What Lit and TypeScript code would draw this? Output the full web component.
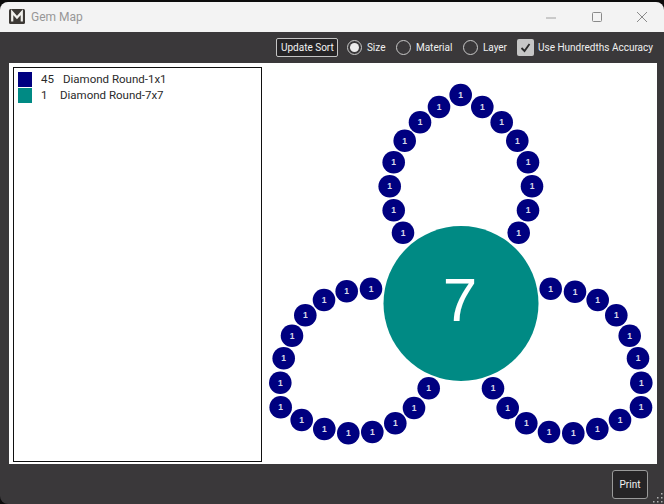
import { LitElement, html, css, svg } from "lit";
import { customElement } from "lit/decorators.js";

const SMALL: [number, number][] = [
  [460.7, 95], [439, 107], [482.3, 107], [420, 122.3], [501.7, 122.3], [404.7, 140.7], [517.3, 140.7],
  [393.7, 162.3], [528, 162.3], [389.7, 186.3], [532, 186.3], [393.7, 210.3], [528, 210.3], [403, 232.7], [518.7, 232.7],
  [371, 288.7], [346.7, 291.3], [324, 300], [305.3, 315.3], [292, 335.7], [283.7, 358.3], [280.3, 382.7], [280.7, 407.3],
  [301.7, 420], [324.3, 429], [348.3, 433.3], [372.3, 432], [395.3, 423.3], [414, 408], [428.7, 388.3],
  [550.7, 288.7], [575, 291.7], [597.7, 300], [616.3, 315.3], [629.7, 335.7], [638, 358.3], [641.3, 382.7], [641, 407.3],
  [620, 420], [597.3, 429], [573.3, 433.3], [549, 432], [526.3, 423.3], [507.7, 408], [493, 388.3],
];

@customElement("app-root")
export class AppRoot extends LitElement {
  static styles = css`
    :host {
      display: block;
      width: 664px;
      height: 504px;
      background: #0c0c0c;
      padding-top: 2px;
      box-sizing: border-box;
      font-family: Roboto, "Noto Sans", sans-serif;
      overflow: hidden;
    }
    .window {
      height: 502px;
      display: flex;
      flex-direction: column;
      border-radius: 8px 8px 0 8px;
      overflow: hidden;
      background: #3a383a;
    }
    .titlebar {
      height: 30px;
      flex: none;
      background: #f3f3f3;
      display: flex;
      align-items: center;
      padding-left: 9px;
      gap: 6px;
      color: #979797;
      font-size: 12px;
    }
    .logo { width: 16px; height: 15px; flex: none; display: block; margin-top: -1px; }
    .title { flex: 1; margin-top: -1px; }
    .winbtns { display: flex; align-items: center; margin-right: 17px; gap: 35.5px; }
    .winbtns svg { display: block; width: 10px; height: 10px; margin-top: -1px; }
    .toolbar {
      height: 31px;
      flex: none;
      display: flex;
      align-items: center;
      justify-content: flex-end;
      padding-right: 11px;
      color: #f0f0f0;
      font-size: 10px;
      box-sizing: border-box;
    }
    .btn {
      background: #262426;
      border: 1px solid #c4c4c4;
      border-radius: 2px;
      color: #f2f2f2;
      font: inherit;
      padding: 0;
      display: flex;
      align-items: center;
      justify-content: center;
    }
    .sort { width: 62px; height: 19px; margin-right: 9px; }
    .opt { display: flex; align-items: center; gap: 4.5px; }
    .radio {
      width: 13px;
      height: 13px;
      border: 1px solid #c8c8c8;
      border-radius: 50%;
      box-sizing: content-box;
      display: flex;
      align-items: center;
      justify-content: center;
    }
    .radio.on::after {
      content: "";
      width: 9px;
      height: 9px;
      border-radius: 50%;
      background: #ececec;
    }
    .size { margin-right: 11px; }
    .material { margin-right: 11px; }
    .layer { margin-right: 10px; }
    .check-opt { gap: 4px; }
    .check {
      width: 17px;
      height: 17px;
      border-radius: 2px;
      background: #c6c6c6;
      display: flex;
      align-items: center;
      justify-content: center;
    }
    .check svg { width: 13px; height: 13px; display: block; }
    .canvas {
      margin: 0 7px 0 9px;
      height: 401px;
      flex: none;
      background: #fff;
      position: relative;
      box-sizing: border-box;
      padding: 4px;
    }
    .list {
      width: 249px;
      height: 395px;
      border: 1px solid #111;
      box-sizing: border-box;
      padding: 4px;
      display: flex;
      flex-direction: column;
      gap: 1px;
      position: relative;
      background: #fff;
      color: #2a2a2a;
      font-size: 11.5px;
    }
    .row { display: flex; align-items: flex-start; height: 15px; line-height: 14px; }
    .swatch { width: 14px; height: 14.5px; flex: none; margin-right: 9px; }
    .count { flex: none; }
    .w1 { width: 22px; }
    .w2 { width: 19px; }
    .map { position: absolute; left: 0; top: 0; width: 648px; height: 401px; display: block; }
    .map text { font-family: "Liberation Sans", Arial, sans-serif; fill: #fff; text-anchor: middle; }
    .small-t { font-size: 8.5px; font-weight: 700; opacity: 0.85; }
    .big-t { font-size: 62px; }
    .footer {
      flex: 1;
      display: flex;
      align-items: center;
      justify-content: flex-end;
      padding-right: 16px;
      position: relative;
    }
    .print { width: 36px; height: 29px; border-color: #9a9a9a; border-radius: 3px; margin-top: 1px; font-size: 10px; }
    .grip { position: absolute; right: 1px; bottom: 1px; width: 10px; height: 10px; display: block; }
  `;

  render() {
    const ox = 9, oy = 63;
    return html`
      <div class="window">
        <div class="titlebar">
          <svg class="logo" viewBox="0 0 16 15">
            <rect width="16" height="15" rx="1.5" fill="#3d3935" />
            <path d="M3.2 12.5V3.2L8 8.5l4.8-5.3v9.3" fill="none" stroke="#f1f0ec" stroke-width="2.2" />
          </svg>
          <div class="title">Gem Map</div>
          <div class="winbtns">
            <svg viewBox="0 0 10 10"><path d="M0 6h10" stroke="#a0a0a0" stroke-width="1" fill="none" /></svg>
            <svg viewBox="0 0 10 10"><rect x="0.5" y="0.5" width="9" height="9" rx="1" stroke="#8a8a8a" stroke-width="1" fill="none" /></svg>
            <svg viewBox="0 0 10 10"><path d="M0 0l10 10M10 0L0 10" stroke="#8a8a8a" stroke-width="1" fill="none" /></svg>
          </div>
        </div>
        <div class="toolbar">
          <button class="btn sort">Update Sort</button>
          <div class="opt size"><span class="radio on"></span><span>Size</span></div>
          <div class="opt material"><span class="radio"></span><span>Material</span></div>
          <div class="opt layer"><span class="radio"></span><span>Layer</span></div>
          <div class="opt check-opt">
            <span class="check">
              <svg viewBox="0 0 13 13"><path d="M2.5 7l3 3 5-7" fill="none" stroke="#2a2a2a" stroke-width="1.8" /></svg>
            </span>
            <span>Use Hundredths Accuracy</span>
          </div>
        </div>
        <div class="canvas">
          <svg class="map" viewBox="0 0 648 401">
            <circle cx=${461 - ox} cy=${303.5 - oy} r="77.5" fill="#008a84" />
            <text class="big-t" x=${460 - ox} y=${321 - oy}>7</text>
            ${SMALL.map(
              ([x, y]) => svg`
                <circle cx=${x - ox} cy=${y - oy} r="11.3" fill="#000080" />
                <text class="small-t" x=${x - ox} y=${y - oy + 3}>1</text>
              `
            )}
          </svg>
          <div class="list">
            <div class="row">
              <span class="swatch" style="background:#000080"></span>
              <span class="count w1">45</span>
              <span>Diamond Round-1x1</span>
            </div>
            <div class="row">
              <span class="swatch" style="background:#008a84"></span>
              <span class="count w2">1</span>
              <span>Diamond Round-7x7</span>
            </div>
          </div>
        </div>
        <div class="footer">
          <button class="btn print">Print</button>
          <svg class="grip" viewBox="0 0 10 10" fill="#b0b0b0">
            <rect x="8" y="0" width="1.5" height="1.5" /><rect x="8" y="4" width="1.5" height="1.5" /><rect x="8" y="8" width="1.5" height="1.5" />
            <rect x="4" y="4" width="1.5" height="1.5" /><rect x="4" y="8" width="1.5" height="1.5" /><rect x="0" y="8" width="1.5" height="1.5" />
          </svg>
        </div>
      </div>
    `;
  }
}
